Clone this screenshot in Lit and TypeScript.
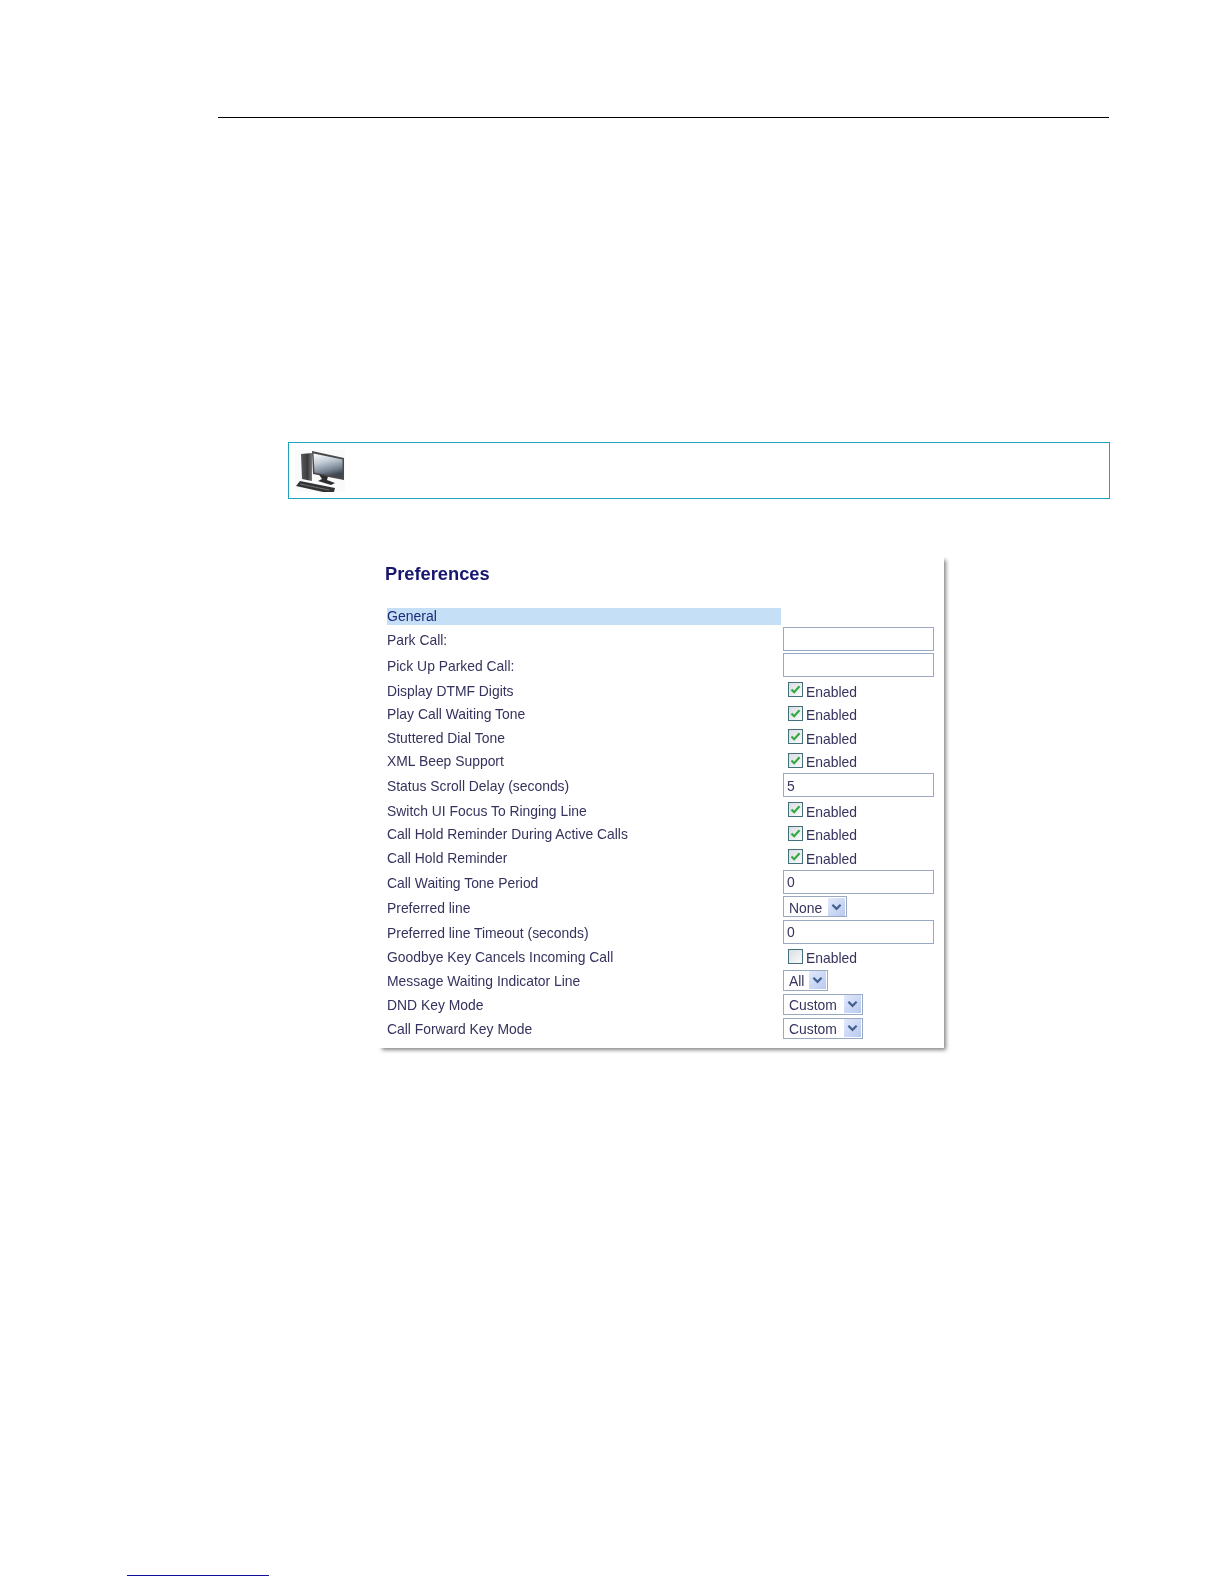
import { LitElement, html, css, svg } from "lit";
import { customElement } from "lit/decorators.js";

type Row =
  | { label: string; kind: "input"; value: string }
  | { label: string; kind: "check"; checked: boolean }
  | { label: string; kind: "select"; value: string; w: number };

const ROWS: Row[] = [
  { label: "Park Call:", kind: "input", value: "" },
  { label: "Pick Up Parked Call:", kind: "input", value: "" },
  { label: "Display DTMF Digits", kind: "check", checked: true },
  { label: "Play Call Waiting Tone", kind: "check", checked: true },
  { label: "Stuttered Dial Tone", kind: "check", checked: true },
  { label: "XML Beep Support", kind: "check", checked: true },
  { label: "Status Scroll Delay (seconds)", kind: "input", value: "5" },
  { label: "Switch UI Focus To Ringing Line", kind: "check", checked: true },
  { label: "Call Hold Reminder During Active Calls", kind: "check", checked: true },
  { label: "Call Hold Reminder", kind: "check", checked: true },
  { label: "Call Waiting Tone Period", kind: "input", value: "0" },
  { label: "Preferred line", kind: "select", value: "None", w: 64 },
  { label: "Preferred line Timeout (seconds)", kind: "input", value: "0" },
  { label: "Goodbye Key Cancels Incoming Call", kind: "check", checked: false },
  { label: "Message Waiting Indicator Line", kind: "select", value: "All", w: 45 },
  { label: "DND Key Mode", kind: "select", value: "Custom", w: 80 },
  { label: "Call Forward Key Mode", kind: "select", value: "Custom", w: 80 },
];

const computerIcon = svg`
  <svg class="pc" viewBox="0 0 50 42" width="50" height="42" aria-hidden="true">
    <defs>
      <linearGradient id="scr" x1="0" y1="0" x2="0.3" y2="1">
        <stop offset="0" stop-color="#ffffff"/>
        <stop offset=".4" stop-color="#c5ced8"/>
        <stop offset=".75" stop-color="#7c8a98"/>
        <stop offset="1" stop-color="#3f4852"/>
      </linearGradient>
      <linearGradient id="tw" x1="0" y1="0" x2="1" y2="0">
        <stop offset="0" stop-color="#5a5a5c"/>
        <stop offset=".6" stop-color="#3a3a3c"/>
        <stop offset="1" stop-color="#77777a"/>
      </linearGradient>
    </defs>
    <rect width="50" height="42" fill="#fafafb"/>
    <path d="M6 4 L17 3 L17 31 L7 29 Z" fill="url(#tw)"/>
    <path d="M17 1 L49 8 L49 30 L18 24 Z" fill="#4a4a4d"/>
    <path d="M18.5 3.5 L47.5 9.5 L47.5 28 L19.5 22.5 Z" fill="url(#scr)"/>
    <path d="M24 24.5 L33 26.5 L32 30 L40 33 L36 35 L23 31 L27 29 Z" fill="#2d2d2f"/>
    <path d="M1 36 L5 31 L40 38 L39 42 L28 42 Z" fill="#333336"/>
    <path d="M5 34 L34 40" stroke="#8a8a8a" stroke-width=".7" fill="none"/>
  </svg>
`;

const chevron = svg`
  <svg viewBox="0 0 12 8" width="11" height="8" aria-hidden="true">
    <path d="M1.5 1.5 L6 6 L10.5 1.5" fill="none" stroke="#44608f" stroke-width="2.4"/>
  </svg>
`;

const tick = svg`
  <svg viewBox="0 0 12 10" width="11" height="9" aria-hidden="true">
    <path d="M1.5 5 L4.5 8 L10.5 1.5" fill="none" stroke="#36a845" stroke-width="2.5"/>
  </svg>
`;

@customElement("app-root")
export class AppRoot extends LitElement {
  static styles = css`
    :host {
      display: flex;
      flex-direction: column;
      width: 1224px;
      height: 1584px;
      box-sizing: border-box;
      padding-top: 117px;
      padding-bottom: 8px;
      background: #fff;
      font-family: "Liberation Sans", Arial, sans-serif;
    }
    .rule {
      height: 1px;
      width: 891px;
      margin-left: 218px;
      background: #000;
    }
    .note {
      box-sizing: border-box;
      margin: 324px 0 0 288px;
      width: 822px;
      height: 57px;
      border: 1px solid #1fa3bd;
      padding: 7px 0 0 6px;
      display: flex;
    }
    .pc {
      filter: blur(0.7px);
    }
    .panel {
      box-sizing: border-box;
      margin: 57px 0 0 378px;
      width: 566px;
      padding: 7px 0 8px 7px;
      background: #fff;
      box-shadow: 3px 3px 4px -1px #848484;
      filter: blur(0.4px);
    }
    h1 {
      margin: 0 0 23px;
      font-size: 18.3px;
      line-height: 22px;
      font-weight: 700;
      color: #16166e;
    }
    .band {
      margin: 0 0 1px 2px;
      width: 394px;
      height: 17px;
      background: #c5dff7;
      font-size: 14px;
      line-height: 17px;
      color: #1d2a78;
    }
    .row {
      display: grid;
      grid-template-columns: 396px 1fr;
      margin-left: 2px;
      align-items: center;
      font-size: 13.9px;
      color: #35335e;
    }
    .row > .lbl {
      padding-top: 2px;
    }
    .row.input { height: 26px; }
    .row.check { height: 23.5px; }
    .row.select { height: 24px; }
    .field {
      box-sizing: border-box;
      display: block;
      width: 151px;
      height: 24px;
      margin: 0;
      padding: 1px 3px 0;
      border: 1px solid #98a9c0;
      border-radius: 0;
      outline: none;
      background: #fff;
      font: inherit;
      color: inherit;
    }
    .chk {
      display: flex;
      align-items: flex-start;
      height: 20px;
      padding-left: 5px;
    }
    .box {
      box-sizing: border-box;
      width: 15px;
      height: 15px;
      margin-top: 2.5px;
      border: 1px solid #44707c;
      background: linear-gradient(135deg, #d9dee2, #fbfbfb);
      display: flex;
      align-items: center;
      justify-content: center;
    }
    .txt {
      margin: 5px 0 0 3px;
      line-height: 15px;
    }
    .sel {
      box-sizing: border-box;
      height: 21px;
      border: 1px solid #98a9c0;
      display: flex;
      align-items: center;
      justify-content: space-between;
      padding: 0 1px 0 5px;
      background: #fff;
    }
    .sel > span {
      padding-top: 2px;
    }
    .arrow {
      width: 17px;
      height: 18px;
      background: linear-gradient(135deg, #e2e9fb, #b8c9f0);
      display: flex;
      align-items: center;
      justify-content: center;
    }
    .foot {
      margin-top: auto;
      margin-left: 127px;
      width: 142px;
      height: 1px;
      background: #10109a;
    }
  `;

  private control(r: Row) {
    if (r.kind === "input") {
      return html`<input class="field" type="text" .value=${r.value} />`;
    }
    if (r.kind === "check") {
      return html`<div class="chk">
        <div class="box">${r.checked ? tick : null}</div>
        <span class="txt">Enabled</span>
      </div>`;
    }
    return html`<div class="sel" style="width:${r.w}px">
      <span>${r.value}</span>
      <div class="arrow">${chevron}</div>
    </div>`;
  }

  render() {
    return html`
      <div class="rule"></div>
      <div class="note">${computerIcon}</div>
      <section class="panel">
        <h1>Preferences</h1>
        <div class="band">General</div>
        ${ROWS.map(
          (r) => html`<div class="row ${r.kind}">
            <span class="lbl">${r.label}</span>
            <div>${this.control(r)}</div>
          </div>`
        )}
      </section>
      <div class="foot"></div>
    `;
  }
}
